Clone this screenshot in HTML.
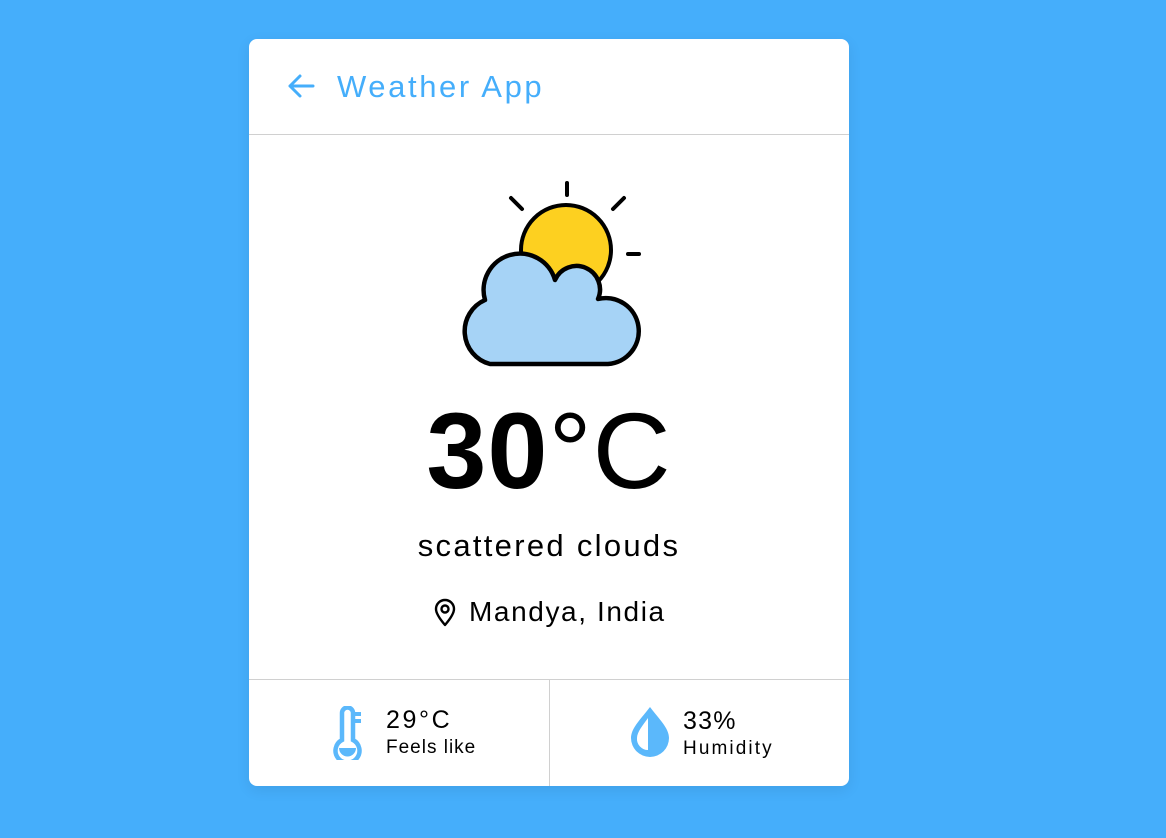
<!DOCTYPE html>
<html><head><meta charset="utf-8"><style>
*{margin:0;padding:0;box-sizing:border-box}
body{width:1166px;height:838px;background:#45aefb;font-family:"Liberation Sans",sans-serif;position:relative;overflow:hidden}
.card{position:absolute;left:249px;top:39px;width:600px;height:747px;background:#fff;border-radius:8px;box-shadow:0 4px 14px rgba(0,0,0,0.08)}
.t{position:absolute;white-space:nowrap}
</style></head><body>
<div class="card">
  <svg class="t" style="left:38px;top:34px" width="28" height="26" viewBox="0 0 28 26"><path d="M26 13H3M13 3L3 13L13 23" fill="none" stroke="#45aefb" stroke-width="3" stroke-linecap="round" stroke-linejoin="round"/></svg>
  <div class="t" style="left:88px;top:30px;font-size:31px;letter-spacing:2.6px;color:#45aefb">Weather App</div>
  <div style="position:absolute;left:0;top:95px;width:600px;height:1px;background:#d0d0d0"></div>
  <div class="t" style="left:0;width:600px;text-align:center;top:358px;font-size:108px;font-weight:bold;line-height:1;letter-spacing:1px">30<span style="font-weight:normal">°C</span></div>
  <div class="t" style="left:0;width:600px;text-align:center;top:489px;font-size:31px;letter-spacing:2.3px">scattered clouds</div>
  <svg class="t" style="left:184px;top:559px" width="24" height="30" viewBox="0 0 24 30"><path d="M12 27C6 20 3 15 3 11A9 9 0 0 1 21 11C21 15 18 20 12 27Z" fill="none" stroke="#000" stroke-width="2.4" stroke-linejoin="round"/><circle cx="12" cy="11" r="3.5" fill="none" stroke="#000" stroke-width="2.4"/></svg>
  <div class="t" style="left:220px;top:557px;font-size:28px;letter-spacing:1.6px">Mandya, India</div>
  <div style="position:absolute;left:0;top:640px;width:600px;height:1px;background:#d0d0d0"></div>
  <div style="position:absolute;left:300px;top:640px;width:1px;height:107px;background:#d0d0d0"></div>
  <svg class="t" style="left:84px;top:667px" width="36" height="54" viewBox="0 0 36 54"><path d="M9 34V7A5.5 5.5 0 0 1 20 7V34A12 12 0 1 1 9 34Z" fill="none" stroke="#5bb8fb" stroke-width="4.5"/><path d="M20 8H28M20 15H28" stroke="#5bb8fb" stroke-width="4"/><path d="M6 42A8.5 8.5 0 0 0 23 42Z" fill="#5bb8fb"/></svg>
  <div class="t" style="left:137px;top:667px;font-size:25px;letter-spacing:2.6px">29°C</div>
  <div class="t" style="left:137px;top:698px;font-size:19px;letter-spacing:1px">Feels like</div>
  <svg class="t" style="left:380px;top:665px" width="42" height="56" viewBox="0 0 42 56"><path d="M21 3C12 15 2 24 2 34A19 19 0 0 0 40 34C40 24 30 15 21 3Z" fill="#5bb8fb"/><path d="M19 14C14 21 8 28 8 34A11 11 0 0 0 19 46Z" fill="#fff"/></svg>
  <div class="t" style="left:434px;top:668px;font-size:25px;letter-spacing:1.2px">33%</div>
  <div class="t" style="left:434px;top:699px;font-size:19px;letter-spacing:2.1px">Humidity</div>
</div>
<svg style="position:absolute;left:0;top:0" width="1166" height="838">
  <g stroke="#000" stroke-width="4" stroke-linecap="round" fill="none">
    <path d="M567 183V195M511 198L522 209M624 198L613 209M628 254H639"/>
  </g>
  <circle cx="566" cy="250" r="45" fill="#fdd020" stroke="#000" stroke-width="4"/>
  <path d="M490 364H608A33 33 0 1 0 598 299A23.5 23.5 0 1 0 555 280A36 36 0 1 0 485 300A34 34 0 0 0 490 364Z" fill="#a6d3f6" stroke="#000" stroke-width="4.5" stroke-linejoin="round"/>
</svg>
</body></html>
